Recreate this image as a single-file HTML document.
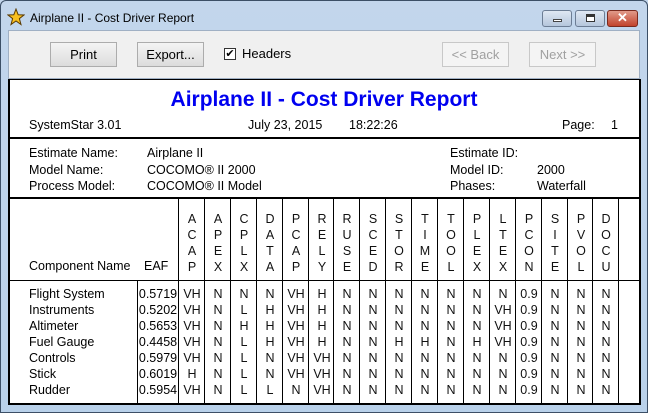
<!DOCTYPE html>
<html><head><style>
*{margin:0;padding:0;box-sizing:border-box}
body{width:648px;height:413px;overflow:hidden;position:relative;background:linear-gradient(#c3d6ec,#b9d1ea);font-family:"Liberation Sans",Arial,sans-serif;font-size:12.5px;color:#000}
.a{position:absolute;white-space:nowrap}
.frame{position:absolute;left:0;top:0;width:648px;height:413px;border:1px solid #3c4f66;border-radius:6px 6px 0 0}
.tb{position:absolute;left:8px;top:30px;width:632px;height:49px;background:#f0f0f0;border:1px solid #a0b0c4}
.btn{position:absolute;height:25px;width:67px;background:linear-gradient(#f4f4f4,#dcdcdc);border:1px solid #acacac;text-align:center;line-height:23px;font-size:13px}
.dis{color:#a0a0a0;background:#f4f4f4;border-color:#c8c8c8}
.rep{position:absolute;left:8px;top:79px;width:633px;height:326px;background:#fff;border:2px solid #000;border-top:1px solid #000}
.h{position:absolute;left:0;width:631px;background:#000}
.v{position:absolute;width:1px;background:#000;top:197px;height:207px}
.col{position:absolute;top:211px;width:26px;text-align:center;line-height:16px;font-size:12.5px;color:#111}
.d{position:absolute;top:286px;width:26px;text-align:center;line-height:16px;font-size:12.5px;color:#111}
.wb{position:absolute;top:10px;height:17px;width:30px;border:1px solid #6c7d94;border-radius:3px;background:linear-gradient(#dfe8f3,#b5c6dc)}
</style></head><body>
<div class="frame"></div>
<svg class="a" style="left:7px;top:8px" width="18" height="18" viewBox="0 0 18 18"><polygon points="9,1 11.2,6.8 17,7 12.4,10.6 14,16.5 9,13 4,16.5 5.6,10.6 1,7 6.8,6.8" fill="#f8c020" stroke="#5a3a00" stroke-width="1"/></svg>
<div class="a" style="left:30px;top:11px;font-size:12px">Airplane II - Cost Driver Report</div>
<div class="wb" style="left:542px"><div style="position:absolute;left:10px;top:8px;width:9px;height:3px;background:#fff;border:1px solid #444"></div></div>
<div class="wb" style="left:575px"><div style="position:absolute;left:10px;top:3px;width:9px;height:8px;border:1px solid #333;border-top:3px solid #333;background:#fff"></div></div>
<div class="wb" style="left:607px;width:31px;background:linear-gradient(#e19a8a,#c2432c);border-color:#7a2a1e;color:#fff;text-align:center;font-weight:bold;font-size:13px;line-height:14px">✕</div>
<div class="tb"></div>
<div class="btn" style="left:50px;top:42px">Print</div>
<div class="btn" style="left:137px;top:42px">Export...</div>
<div class="a" style="left:224px;top:48px;width:12px;height:12px;border:1px solid #333;background:#fff;font-size:11px;line-height:10px;text-align:center">✔</div>
<div class="a" style="left:242px;top:46px;font-size:13px">Headers</div>
<div class="btn dis" style="left:442px;top:42px">&lt;&lt; Back</div>
<div class="btn dis" style="left:529px;top:42px">Next &gt;&gt;</div>
<div class="rep"></div>
<div class="h a" style="left:8px;top:137px;height:2px;width:633px"></div>
<div class="h a" style="left:8px;top:197px;height:2px;width:633px"></div>
<div class="h a" style="left:8px;top:280px;height:1px;width:633px"></div>
<div class="a" style="left:0;width:648px;top:88px;text-align:center;color:#0000f0;font-weight:bold;font-size:21px">Airplane II - Cost Driver Report</div>
<div class="a" style="left:29px;top:118px">SystemStar 3.01</div>
<div class="a" style="left:248px;top:118px">July 23, 2015</div>
<div class="a" style="left:349px;top:118px">18:22:26</div>
<div class="a" style="left:562px;top:118px">Page:</div>
<div class="a" style="left:611px;top:118px">1</div>
<div class="a" style="left:29px;top:145px;line-height:16.5px">Estimate Name:<br>Model Name:<br>Process Model:</div>
<div class="a" style="left:147px;top:145px;line-height:16.5px">Airplane II<br>COCOMO® II 2000<br>COCOMO® II Model</div>
<div class="a" style="left:450px;top:145px;line-height:16.5px">Estimate ID:<br>Model ID:<br>Phases:</div>
<div class="a" style="left:537px;top:145px;line-height:16.5px"><br>2000<br>Waterfall</div>
<div class="a" style="left:29px;top:259px">Component Name</div>
<div class="a" style="left:144px;top:259px">EAF</div>
<div class="v" style="left:137px;top:281px;height:123px"></div>
<div class="a" style="left:29px;top:286px;line-height:16px">Flight System<br>Instruments<br>Altimeter<br>Fuel Gauge<br>Controls<br>Stick<br>Rudder</div>
<div class="a" style="left:138px;top:286px;line-height:16px;width:40px;text-align:center">0.5719<br>0.5202<br>0.5653<br>0.4458<br>0.5979<br>0.6019<br>0.5954</div>
<div id="cols"></div>
<script>
var n=["ACAP","APEX","CPLX","DATA","PCAP","RELY","RUSE","SCED","STOR","TIME","TOOL","PLEX","LTEX","PCON","SITE","PVOL","DOCU"];
var rows=[
"VH N N N VH H N N N N N N N 0.9 N N N",
"VH N L H VH H N N N N N N VH 0.9 N N N",
"VH N H H VH H N N N N N N VH 0.9 N N N",
"VH N L H VH H N N H H N H VH 0.9 N N N",
"VH N L N VH VH N N N N N N N 0.9 N N N",
"H N L N VH VH N N N N N N N 0.9 N N N",
"VH N L L N VH N N N N N N N 0.9 N N N"].map(function(r){return r.split(" ")});
var h="";
for(var i=0;i<=17;i++){var x=Math.round(178+i*25.9);h+='<div class="v" style="left:'+x+'px"></div>';}
for(var i=0;i<17;i++){var x=Math.round(178+i*25.9)+1;
h+='<div class="col" style="left:'+x+'px">'+n[i].split("").join("<br>")+'</div>';
h+='<div class="d" style="left:'+x+'px">'+rows.map(function(r){return r[i]}).join("<br>")+'</div>';}
document.getElementById("cols").innerHTML=h;
</script>
</body></html>
